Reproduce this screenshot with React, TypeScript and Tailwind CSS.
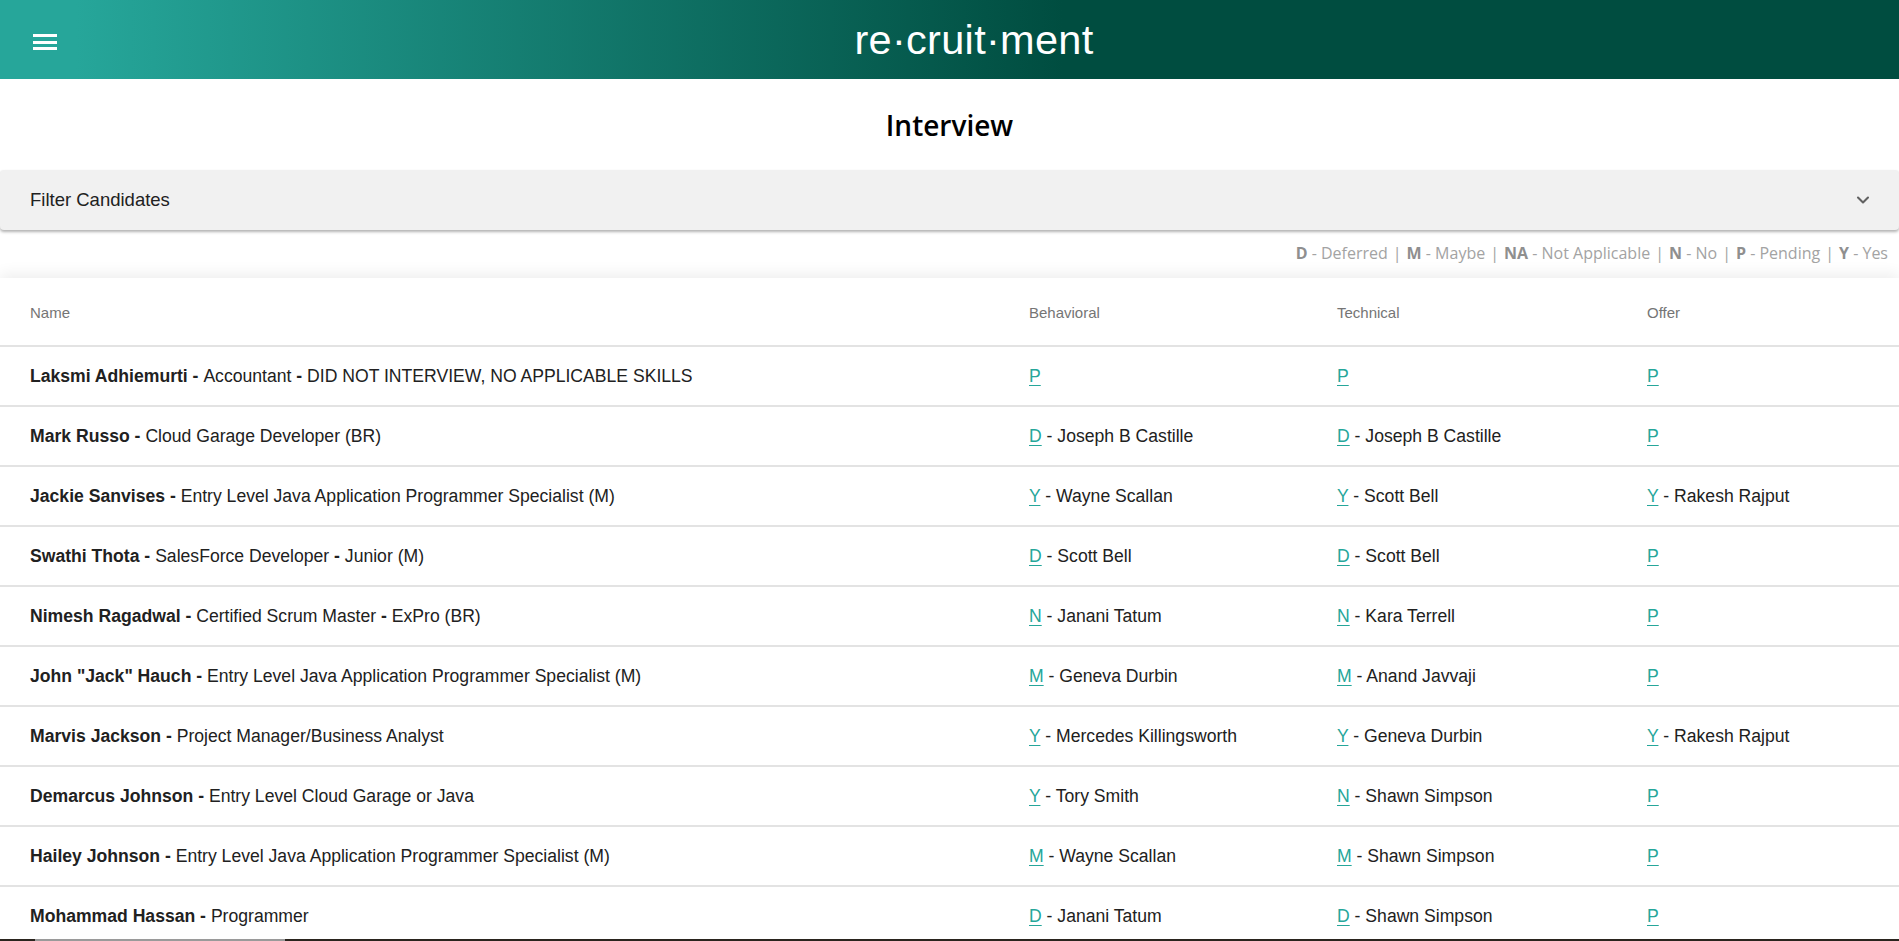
import { ChevronDown } from 'lucide-react';

type Mark = { code: string; by?: string };

type Candidate = {
  name: string;
  role: string;
  note?: string;
  behavioral: Mark;
  technical: Mark;
  offer: Mark;
};

const candidates: Candidate[] = [
  {
    name: 'Laksmi Adhiemurti',
    role: 'Accountant',
    note: 'DID NOT INTERVIEW, NO APPLICABLE SKILLS',
    behavioral: { code: 'P' },
    technical: { code: 'P' },
    offer: { code: 'P' },
  },
  {
    name: 'Mark Russo',
    role: 'Cloud Garage Developer (BR)',
    behavioral: { code: 'D', by: 'Joseph B Castille' },
    technical: { code: 'D', by: 'Joseph B Castille' },
    offer: { code: 'P' },
  },
  {
    name: 'Jackie Sanvises',
    role: 'Entry Level Java Application Programmer Specialist (M)',
    behavioral: { code: 'Y', by: 'Wayne Scallan' },
    technical: { code: 'Y', by: 'Scott Bell' },
    offer: { code: 'Y', by: 'Rakesh Rajput' },
  },
  {
    name: 'Swathi Thota',
    role: 'SalesForce Developer',
    note: 'Junior (M)',
    behavioral: { code: 'D', by: 'Scott Bell' },
    technical: { code: 'D', by: 'Scott Bell' },
    offer: { code: 'P' },
  },
  {
    name: 'Nimesh Ragadwal',
    role: 'Certified Scrum Master',
    note: 'ExPro (BR)',
    behavioral: { code: 'N', by: 'Janani Tatum' },
    technical: { code: 'N', by: 'Kara Terrell' },
    offer: { code: 'P' },
  },
  {
    name: 'John "Jack" Hauch',
    role: 'Entry Level Java Application Programmer Specialist (M)',
    behavioral: { code: 'M', by: 'Geneva Durbin' },
    technical: { code: 'M', by: 'Anand Javvaji' },
    offer: { code: 'P' },
  },
  {
    name: 'Marvis Jackson',
    role: 'Project Manager/Business Analyst',
    behavioral: { code: 'Y', by: 'Mercedes Killingsworth' },
    technical: { code: 'Y', by: 'Geneva Durbin' },
    offer: { code: 'Y', by: 'Rakesh Rajput' },
  },
  {
    name: 'Demarcus Johnson',
    role: 'Entry Level Cloud Garage or Java',
    behavioral: { code: 'Y', by: 'Tory Smith' },
    technical: { code: 'N', by: 'Shawn Simpson' },
    offer: { code: 'P' },
  },
  {
    name: 'Hailey Johnson',
    role: 'Entry Level Java Application Programmer Specialist (M)',
    behavioral: { code: 'M', by: 'Wayne Scallan' },
    technical: { code: 'M', by: 'Shawn Simpson' },
    offer: { code: 'P' },
  },
  {
    name: 'Mohammad Hassan',
    role: 'Programmer',
    behavioral: { code: 'D', by: 'Janani Tatum' },
    technical: { code: 'D', by: 'Shawn Simpson' },
    offer: { code: 'P' },
  },
];

const legend = [
  ['D', 'Deferred'],
  ['M', 'Maybe'],
  ['NA', 'Not Applicable'],
  ['N', 'No'],
  ['P', 'Pending'],
  ['Y', 'Yes'],
];

function MarkCell({ mark }: { mark: Mark }) {
  return (
    <div>
      <a href="#" className="text-[#26a69a] underline underline-offset-[3px]">
        {mark.code}
      </a>
      {mark.by && <span> - {mark.by}</span>}
    </div>
  );
}

export default function App() {
  return (
    <div className="min-h-screen bg-white font-['Liberation_Sans',Arial,sans-serif] text-[#212121]">
      <header className="flex h-[79px] items-center bg-[linear-gradient(to_right,#26a69a_4%,#004d40_56%)] pl-[33px]">
        <button aria-label="Menu" className="mt-[5px] flex h-6 w-6 flex-col justify-between py-[4px]">
          <span className="block h-[3px] w-full bg-white" />
          <span className="block h-[3px] w-full bg-white" />
          <span className="block h-[3px] w-full bg-white" />
        </button>
        <div className="flex-1 pr-[8px] text-center text-[41.5px] leading-none tracking-[0.3px] text-white">
          re·cruit·ment
        </div>
      </header>

      <h1 className="pb-[25px] pt-[26px] text-center font-['Open_Sans',sans-serif] text-[28px] font-semibold leading-[40px] text-black">
        Interview
      </h1>

      <div className="flex h-[60px] items-center justify-between rounded-[4px] bg-[#f1f1f1] pl-[30px] pr-[26px] shadow-[0_2px_3px_rgba(0,0,0,0.3)]">
        <span className="text-[18.5px] text-[#212121]">Filter Candidates</span>
        <ChevronDown className="h-5 w-5 text-[#616161]" strokeWidth={2.5} />
      </div>

      <div className="flex h-[48px] items-center justify-end pb-[3px] pr-[11px] font-['Open_Sans',sans-serif] text-[16px] text-[#a3a3a3]">
        {legend.map(([k, v], i) => (
          <span key={k}>
            {i > 0 && <span className="px-[5px]">|</span>}
            <b className="font-bold text-[#8f8f8f]">{k}</b> - {v}
          </span>
        ))}
      </div>

      <div className="bg-white shadow-[0_-4px_14px_rgba(0,0,0,0.07)]">
        <div className="grid h-[69px] grid-cols-[999px_308px_310px_1fr] items-center border-b-2 border-[#e3e3e3] px-[30px] pt-[4px] text-[15px] text-[#757575]">
          <div>Name</div>
          <div>Behavioral</div>
          <div>Technical</div>
          <div>Offer</div>
        </div>
        {candidates.map((c) => (
          <div
            key={c.name}
            className="grid h-[60px] grid-cols-[999px_308px_310px_1fr] items-center border-b-2 border-[#e3e3e3] px-[30px] text-[17.6px]"
          >
            <div>
              <b className="font-bold">{c.name} - </b>
              {c.role}
              {c.note && (
                <>
                  <b className="font-bold"> - </b>
                  {c.note}
                </>
              )}
            </div>
            <MarkCell mark={c.behavioral} />
            <MarkCell mark={c.technical} />
            <MarkCell mark={c.offer} />
          </div>
        ))}
      </div>

      <div className="fixed inset-x-0 bottom-0 flex h-[2px] bg-[#2a241e]">
        <div className="ml-[35px] w-[250px] bg-[#9a9a9a]" />
      </div>
    </div>
  );
}
